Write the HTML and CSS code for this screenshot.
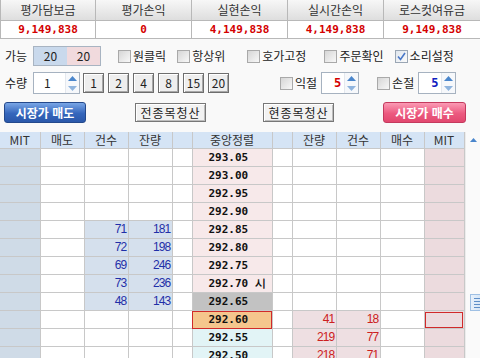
FILE: index.html
```html
<!DOCTYPE html>
<html lang="ko">
<head>
	<meta charset="UTF-8">
	<title>호가 주문</title>
	<link rel="stylesheet" href="styles.css">
</head>
<body>
	<div class="summary">
		<div class="sum-col"><div class="sum-head">평가담보금</div><div class="sum-val">9,149,838</div></div>
		<div class="sum-col"><div class="sum-head">평가손익</div><div class="sum-val">0</div></div>
		<div class="sum-col"><div class="sum-head">실현손익</div><div class="sum-val">4,149,838</div></div>
		<div class="sum-col"><div class="sum-head">실시간손익</div><div class="sum-val">4,149,838</div></div>
		<div class="sum-col"><div class="sum-head">로스컷여유금</div><div class="sum-val">9,149,838</div></div>
	</div>

	<div class="controls">
		<div class="ctl-row row-avail">
			<span class="ctl-label">가능</span>
			<div class="avail"><span class="avail-sell">20</span><span class="avail-buy">20</span></div>
			<label class="check c-oneclick"><span class="cbox"></span>원클릭</label>
			<label class="check c-top"><span class="cbox"></span>항상위</label>
			<label class="check c-fix"><span class="cbox"></span>호가고정</label>
			<label class="check c-confirm"><span class="cbox"></span>주문확인</label>
			<label class="check c-sound"><span class="cbox checked"><svg width="11" height="11" viewBox="0 0 11 11"><path d="M2 5.5 L4.5 8.5 L9 2" fill="none" stroke="#4a78c8" stroke-width="1.6"/></svg></span>소리설정</label>
		</div>

		<div class="ctl-row row-qty">
			<span class="ctl-label">수량</span>
			<div class="spin spin-qty">
				<span class="spin-val">1</span>
				<span class="spin-arrows">
					<svg width="9" height="5" viewBox="0 0 9 5"><path d="M4.5 0 L9 5 L0 5 Z" fill="#4a86cc"/></svg>
					<svg width="9" height="5" viewBox="0 0 9 5"><path d="M0 0 L9 0 L4.5 5 Z" fill="#8fb4de"/></svg>
				</span>
			</div>
			<div class="qty-btns">
				<span class="qbtn">1</span>
				<span class="qbtn">2</span>
				<span class="qbtn">4</span>
				<span class="qbtn">8</span>
				<span class="qbtn">15</span>
				<span class="qbtn">20</span>
			</div>
			<label class="check c-profit"><span class="cbox"></span>익절</label>
			<div class="spin spin-small">
				<span class="spin-val num-red">5</span>
				<span class="spin-arrows">
					<svg width="9" height="5" viewBox="0 0 9 5"><path d="M4.5 0 L9 5 L0 5 Z" fill="#4a86cc"/></svg>
					<svg width="9" height="5" viewBox="0 0 9 5"><path d="M0 0 L9 0 L4.5 5 Z" fill="#8fb4de"/></svg>
				</span>
			</div>
			<label class="check c-loss"><span class="cbox"></span>손절</label>
			<div class="spin spin-small">
				<span class="spin-val num-blue">5</span>
				<span class="spin-arrows">
					<svg width="9" height="5" viewBox="0 0 9 5"><path d="M4.5 0 L9 5 L0 5 Z" fill="#4a86cc"/></svg>
					<svg width="9" height="5" viewBox="0 0 9 5"><path d="M0 0 L9 0 L4.5 5 Z" fill="#8fb4de"/></svg>
				</span>
			</div>
		</div>

		<div class="ctl-row row-btns">
			<span class="btn btn-sell">시장가 매도</span>
			<span class="btn btn-plain btn-all">전종목청산</span>
			<span class="btn btn-plain btn-cur">현종목청산</span>
			<span class="btn btn-buy">시장가 매수</span>
		</div>
	</div>

	<div class="book">
		<table class="hoga">
			<colgroup>
				<col class="w40"><col class="w44"><col class="w44"><col class="w44"><col class="w20">
				<col class="w80">
				<col class="w20"><col class="w44"><col class="w44"><col class="w44"><col class="w40">
			</colgroup>
			<thead>
				<tr><th>MIT</th><th>매도</th><th>건수</th><th>잔량</th><th></th><th>중앙정렬</th><th></th><th>잔량</th><th>건수</th><th>매수</th><th>MIT</th></tr>
			</thead>
			<tbody>
				<tr><td class="mit-s"></td><td></td><td></td><td></td><td></td><td class="px px-ask">293.05</td><td></td><td></td><td></td><td></td><td class="mit-b"></td></tr>
				<tr><td class="mit-s"></td><td></td><td></td><td></td><td></td><td class="px px-ask">293.00</td><td></td><td></td><td></td><td></td><td class="mit-b"></td></tr>
				<tr><td class="mit-s"></td><td></td><td></td><td></td><td></td><td class="px px-ask">292.95</td><td></td><td></td><td></td><td></td><td class="mit-b"></td></tr>
				<tr><td class="mit-s"></td><td></td><td></td><td></td><td></td><td class="px px-ask">292.90</td><td></td><td></td><td></td><td></td><td class="mit-b"></td></tr>
				<tr><td class="mit-s"></td><td></td><td class="q-ask">71</td><td class="q-ask">181</td><td></td><td class="px px-ask">292.85</td><td></td><td></td><td></td><td></td><td class="mit-b"></td></tr>
				<tr><td class="mit-s"></td><td></td><td class="q-ask">72</td><td class="q-ask">198</td><td></td><td class="px px-ask">292.80</td><td></td><td></td><td></td><td></td><td class="mit-b"></td></tr>
				<tr><td class="mit-s"></td><td></td><td class="q-ask">69</td><td class="q-ask">246</td><td></td><td class="px px-ask">292.75</td><td></td><td></td><td></td><td></td><td class="mit-b"></td></tr>
				<tr><td class="mit-s"></td><td></td><td class="q-ask">73</td><td class="q-ask">236</td><td></td><td class="px px-ask">292.70 시</td><td></td><td></td><td></td><td></td><td class="mit-b"></td></tr>
				<tr><td class="mit-s"></td><td></td><td class="q-ask">48</td><td class="q-ask">143</td><td></td><td class="px px-last">292.65</td><td></td><td></td><td></td><td></td><td class="mit-b"></td></tr>
				<tr><td class="mit-s"></td><td></td><td></td><td></td><td></td><td class="px px-cur">292.60</td><td></td><td class="q-bid">41</td><td class="q-bid">18</td><td></td><td class="mit-b mit-sel"></td></tr>
				<tr><td class="mit-s"></td><td></td><td></td><td></td><td></td><td class="px px-bid">292.55</td><td></td><td class="q-bid">219</td><td class="q-bid">77</td><td></td><td class="mit-b"></td></tr>
				<tr><td class="mit-s"></td><td></td><td></td><td></td><td></td><td class="px px-bid">292.50</td><td></td><td class="q-bid">218</td><td class="q-bid">71</td><td></td><td class="mit-b"></td></tr>
			</tbody>
		</table>
		<div class="vscroll">
			<svg class="vs-up" width="7" height="4" viewBox="0 0 7 4"><path d="M3.5 0 L7 4 L0 4 Z" fill="#4a86cc"/></svg>
			<div class="vs-thumb"><span></span><span></span><span></span><span></span></div>
		</div>
	</div>
</body>
</html>
```

FILE: styles.css
```css
body {
	margin: 0;
	width: 480px;
	height: 358px;
	overflow: hidden;
	background: #f9f9f9;
	font-family: "Noto Sans CJK KR", "Noto Sans", sans-serif;
	font-size: 12px;
	color: #222;
}

/* summary strip */
.summary {
	display: grid;
	grid-template-columns: repeat(5, 96px);
	background: #fff;
	border-bottom: 1px solid #b8b8b8;
}
.sum-col {
	border-right: 1px solid #b8b8b8;
}
.sum-col:first-child {
	border-left: 1px solid #b8b8b8;
}
.sum-col:last-child {
	border-right: none;
}
.sum-head {
	height: 20px;
	line-height: 20px;
	text-align: center;
	background: linear-gradient(#f7f7f7, #dedede);
	border-bottom: 1px solid #b8b8b8;
	color: #333;
}
.sum-val {
	height: 17px;
	line-height: 17px;
	text-align: center;
	font-family: "DejaVu Sans Mono", monospace;
	font-weight: bold;
	font-size: 11px;
	color: #d40000;
}

/* controls */
.controls {
	padding: 7px 0 0 0;
}
.ctl-row {
	display: flex;
	align-items: center;
}
.row-avail {
	height: 20px;
}
.row-qty {
	height: 22px;
	margin-top: 6px;
}
.row-btns {
	height: 21px;
	margin-top: 8px;
}
.ctl-label {
	width: 28px;
	padding-left: 5px;
	line-height: 20px;
}

.avail {
	display: flex;
	width: 68px;
	height: 20px;
	box-sizing: border-box;
	border: 1px solid #a8b4c2;
}
.avail span {
	flex: 1;
	text-align: center;
	line-height: 18px;
}
.avail-sell {
	background: #c9d9ec;
}
.avail-buy {
	background: #f1dadd;
}

.check {
	display: flex;
	align-items: center;
	gap: 2px;
	line-height: 20px;
}
.cbox {
	display: inline-flex;
	align-items: center;
	justify-content: center;
	width: 13px;
	height: 13px;
	box-sizing: border-box;
	border: 1px solid #a9a9a9;
	background: linear-gradient(135deg, #d6d6d6, #f8f8f8);
}
.cbox.checked {
	background: linear-gradient(135deg, #dfe6ee, #fbfbfb);
	border-color: #9aa6b4;
}
.c-oneclick { margin-left: 17px; }
.c-top { margin-left: 11px; }
.c-fix { margin-left: 22px; }
.c-confirm { margin-left: 18px; }
.c-sound { margin-left: 11px; }

.spin {
	display: flex;
	height: 22px;
	box-sizing: border-box;
	border: 1px solid #a6b2c0;
	background: #fff;
}
.spin-qty {
	width: 47px;
}
.spin-small {
	width: 38px;
	margin-left: 4px;
}
.spin-val {
	flex: 1;
	padding-left: 10px;
	line-height: 20px;
}
.spin-small .spin-val {
	padding-left: 12px;
	font-family: "DejaVu Sans Mono", monospace;
	font-weight: bold;
	font-size: 12px;
}
.num-red { color: #d40000; }
.num-blue { color: #1020c0; }
.spin-arrows {
	width: 13px;
	display: flex;
	flex-direction: column;
	justify-content: space-around;
	align-items: center;
	background: #f6f8fb;
	border-left: 1px solid #e4e8ee;
}

.qty-btns {
	display: flex;
	gap: 4px;
	margin-left: 3px;
}
.qbtn {
	width: 21px;
	height: 20px;
	box-sizing: border-box;
	text-align: center;
	line-height: 18px;
	border: 1px solid #6e6e6e;
	background: #eeeeee;
	box-shadow: inset 1px 1px 0 #fff, inset -1px -1px 0 #a8a8a8;
}
.c-profit { margin-left: 51px; }
.c-loss { margin-left: 18px; }

.btn {
	box-sizing: border-box;
	text-align: center;
}
.btn-sell,
.btn-buy {
	width: 82px;
	height: 21px;
	line-height: 19px;
	border-radius: 3px;
	color: #fff;
	font-weight: bold;
}
.btn-sell {
	margin-left: 4px;
	background: linear-gradient(#79a6e6, #3566bc 55%, #2b58aa);
	border: 1px solid #24498c;
}
.btn-buy {
	margin-left: 49px;
	width: 83px;
	background: linear-gradient(#fb9ab4, #ec5a80 55%, #e2486f);
	border: 1px solid #c43a5e;
}
.btn-plain {
	width: 71px;
	height: 19px;
	line-height: 17px;
	border: 1px solid #777;
	background: #f2f2f2;
	box-shadow: inset 1px 1px 0 #fff, inset -1px -1px 0 #bdbdbd;
	letter-spacing: 1px;
}
.btn-all { margin-left: 49px; }
.btn-cur { margin-left: 57px; }

/* order book */
.book {
	display: flex;
	margin-top: 9px;
}
.hoga {
	width: 464px;
	table-layout: fixed;
	border-collapse: collapse;
	background: #fff;
}
.w20 { width: 20px; }
.w40 { width: 40px; }
.w44 { width: 44px; }
.w80 { width: 80px; }
.hoga th,
.hoga td {
	border: 1px solid #c8c8c8;
	padding: 0;
	height: 17px;
	line-height: 17px;
	overflow: hidden;
	white-space: nowrap;
}
.hoga th {
	height: 16px;
	line-height: 16px;
	background: #d5e4f5;
	font-weight: normal;
	color: #333;
	border-top: none;
}
.hoga th:first-child,
.hoga td:first-child {
	border-left: none;
}
.mit-s {
	background: #cfdbe7;
}
.mit-b {
	background: #ecdbde;
}
.mit-sel {
	outline: 1px solid #d02a2a;
	outline-offset: -2px;
}
.px {
	padding-left: 16px !important;
	font-family: "DejaVu Sans Mono", monospace;
	font-weight: bold;
	font-size: 11px;
	color: #111;
}
.px-ask { background: #f7e9ea; }
.px-last { background: #c2c2c2; }
.px-cur {
	background: #f5c68d;
	outline: 1px solid #d02a2a;
	outline-offset: -1px;
}
.px-bid { background: #e2f4f6; }
.q-ask,
.q-bid {
	text-align: right;
	padding-right: 1px !important;
	font-family: "Liberation Sans", sans-serif;
	letter-spacing: -0.8px;
}
.q-ask {
	background: #d5e0ed;
	color: #1f2fa8;
}
.q-bid {
	background: #eedfe2;
	color: #cc2020;
}

.vscroll {
	width: 16px;
	display: flex;
	flex-direction: column;
	align-items: center;
	background: #fafafa;
	border-left: 1px solid #ececec;
}
.vs-up {
	margin-top: 6px;
}
.vs-thumb {
	margin-top: 152px;
	margin-left: 4px;
	width: 12px;
	height: 17px;
	box-sizing: border-box;
	border: 1px solid #9fc0e4;
	border-right: none;
	background: linear-gradient(90deg, #e8f1fb, #d3e4f6);
	display: flex;
	flex-direction: column;
	justify-content: center;
	gap: 2px;
	padding-left: 3px;
}
.vs-thumb span {
	display: block;
	width: 8px;
	height: 1px;
	background: #5f8fc8;
}
```
